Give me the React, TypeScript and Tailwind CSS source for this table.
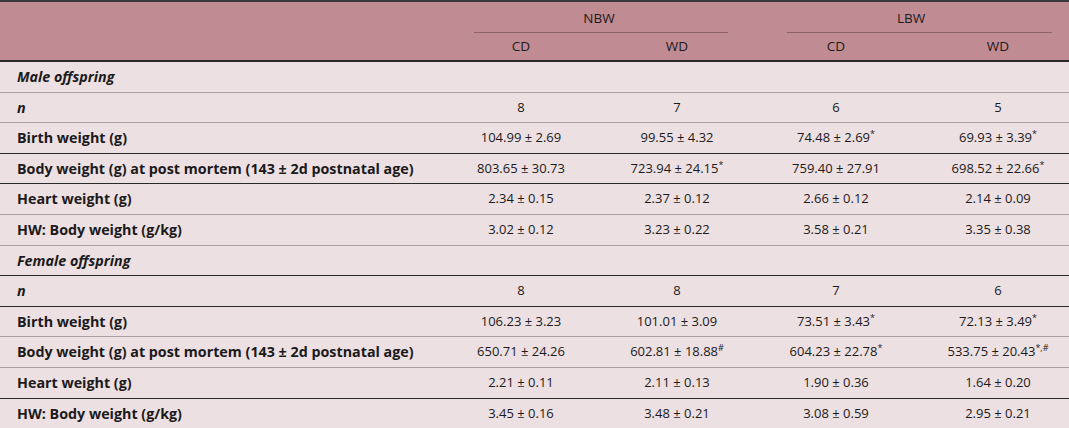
import React from "react";

type Cell = { v: string; sup?: string };
type Row = { label: string; italic?: boolean; cells?: Cell[]; border: "dark" | "gray" };

const c = (v: string, sup?: string): Cell => ({ v, sup });

const rows: Row[] = [
  { label: "Male offspring", italic: true, border: "gray" },
  { label: "n", italic: true, cells: [c("8"), c("7"), c("6"), c("5")], border: "gray" },
  { label: "Birth weight (g)", cells: [c("104.99 ± 2.69"), c("99.55 ± 4.32"), c("74.48 ± 2.69", "*"), c("69.93 ± 3.39", "*")], border: "dark" },
  { label: "Body weight (g) at post mortem (143 ± 2d postnatal age)", cells: [c("803.65 ± 30.73"), c("723.94 ± 24.15", "*"), c("759.40 ± 27.91"), c("698.52 ± 22.66", "*")], border: "dark" },
  { label: "Heart weight (g)", cells: [c("2.34 ± 0.15"), c("2.37 ± 0.12"), c("2.66 ± 0.12"), c("2.14 ± 0.09")], border: "gray" },
  { label: "HW: Body weight (g/kg)", cells: [c("3.02 ± 0.12"), c("3.23 ± 0.22"), c("3.58 ± 0.21"), c("3.35 ± 0.38")], border: "gray" },
  { label: "Female offspring", italic: true, border: "dark" },
  { label: "n", italic: true, cells: [c("8"), c("8"), c("7"), c("6")], border: "dark" },
  { label: "Birth weight (g)", cells: [c("106.23 ± 3.23"), c("101.01 ± 3.09"), c("73.51 ± 3.43", "*"), c("72.13 ± 3.49", "*")], border: "gray" },
  { label: "Body weight (g) at post mortem (143 ± 2d postnatal age)", cells: [c("650.71 ± 24.26"), c("602.81 ± 18.88", "#"), c("604.23 ± 22.78", "*"), c("533.75 ± 20.43", "*,#")], border: "gray" },
  { label: "Heart weight (g)", cells: [c("2.21 ± 0.11"), c("2.11 ± 0.13"), c("1.90 ± 0.36"), c("1.64 ± 0.20")], border: "dark" },
  { label: "HW: Body weight (g/kg)", cells: [c("3.45 ± 0.16"), c("3.48 ± 0.21"), c("3.08 ± 0.59"), c("2.95 ± 0.21")], border: "dark" },
];

const cols = "grid grid-cols-[443px_156px_156px_162px_1fr]";

export default function App() {
  return (
    <div
      className="w-[1069px] h-[428px] bg-[#ece0e2] text-[13px] text-[#1c1a1b] overflow-hidden"
      style={{ fontFamily: "'Open Sans', 'Noto Sans', sans-serif" }}
    >
      {/* header */}
      <div className="h-[62px] bg-[#c08b93] border-t-2 border-t-[#3a3a3a] border-b-2 border-b-[#2a2a2a] text-[13.5px]">
        <div className={`${cols} h-[31px]`}>
          <div />
          <div className="col-span-2 flex flex-col">
            <div className="flex-1 flex items-center justify-center pt-[2px]">NBW</div>
            <div className="ml-[31px] mr-[27px] h-px bg-[#8d6168]" />
          </div>
          <div className="col-span-2 flex flex-col">
            <div className="flex-1 flex items-center justify-center pt-[2px] pr-[2px]">LBW</div>
            <div className="ml-[32px] mr-[17px] h-px bg-[#8d6168]" />
          </div>
        </div>
        <div className={`${cols} h-[27px] items-center`}>
          <div />
          <div className="text-center">CD</div>
          <div className="text-center">WD</div>
          <div className="text-center">CD</div>
          <div className="text-center pl-[10px]">WD</div>
        </div>
      </div>
      {rows.map((r, i) => (
        <div
          key={i}
          className={`${cols} h-[30.6px] items-center border-b ${
            r.border === "dark" ? "border-b-[#2a2a2a]" : "border-b-[#aaa0a2]"
          }`}
        >
          <div className={`pl-[17px] text-[14.3px] ${r.italic ? "italic font-bold" : "font-bold"}`}>{r.label}</div>
          {(r.cells ?? [null, null, null, null]).map((cell, j) => (
            <div key={j} className={`text-center ${j === 3 ? "pl-[10px]" : ""}`}>
              {cell && (
                <span>
                  {cell.v}
                  {cell.sup && (
                    <span className="relative top-[-5px] text-[9px] leading-none">{cell.sup}</span>
                  )}
                </span>
              )}
            </div>
          ))}
        </div>
      ))}
    </div>
  );
}
